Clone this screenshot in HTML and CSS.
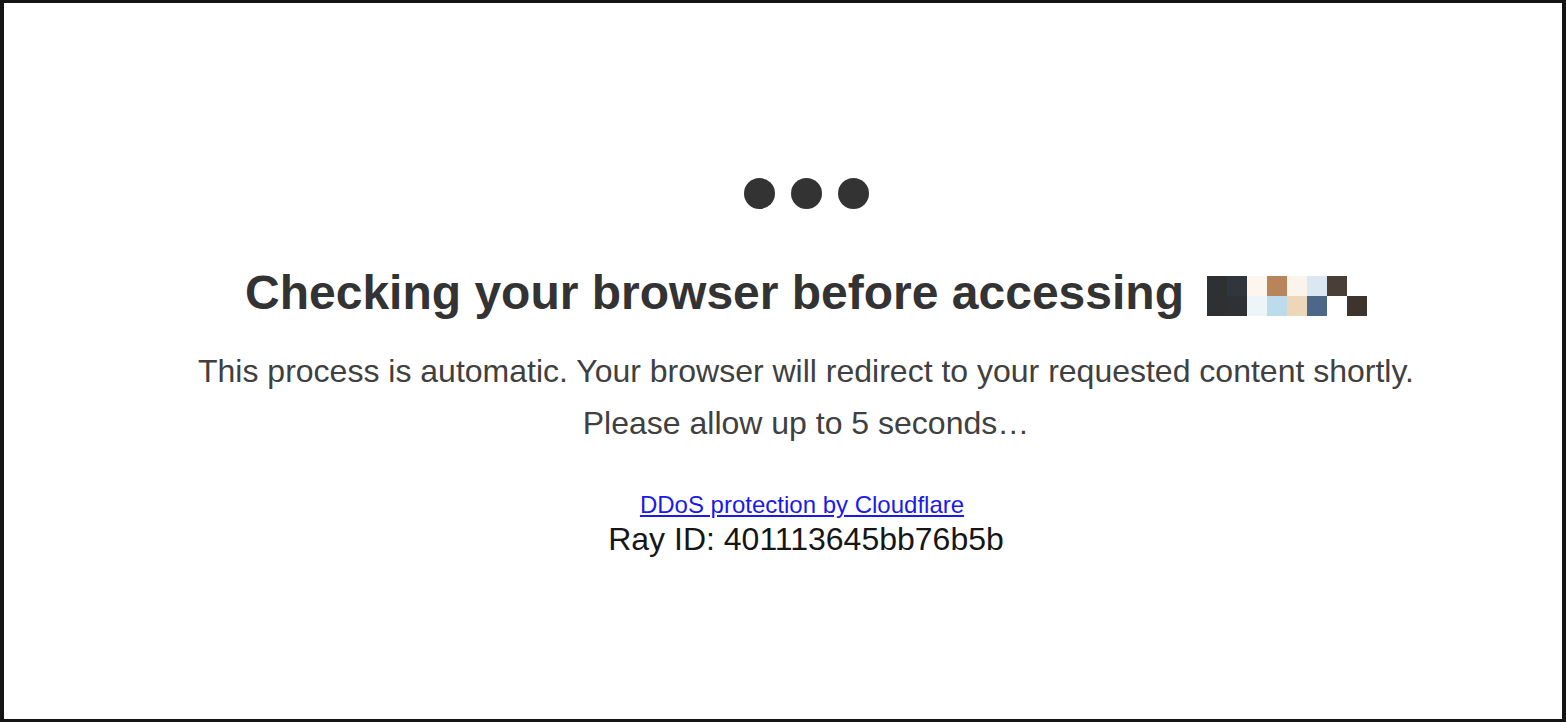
FILE: index.html
```html
<!DOCTYPE html>
<html lang="en">
<head>
<meta charset="utf-8">
<title>Just a moment...</title>
<link rel="stylesheet" href="styles.css">
</head>
<body>
<div class="frame">
  <main class="content">
    <div class="dots"><span></span><span></span><span></span></div>
    <h1 class="title">Checking your browser before accessing<span class="mosaic" aria-label="redacted"><span class="mosaic-grid"><i class="c1"></i><i class="c2"></i><i class="c3"></i><i class="c4"></i><i class="c5"></i><i class="c6"></i><i class="c7"></i><i class="c0"></i><i class="c1"></i><i class="c8"></i><i class="c9"></i><i class="c10"></i><i class="c11"></i><i class="c12"></i><i class="c0"></i><i class="c13"></i></span></span></h1>
    <p class="text first">This process is automatic. Your browser will redirect to your requested content shortly.</p>
    <p class="text second">Please allow up to 5 seconds…</p>
    <a class="link" href="#">DDoS protection by Cloudflare</a>
    <div class="ray">Ray ID: 401113645bb76b5b</div>
  </main>
</div>
</body>
</html>
```

FILE: styles.css
```css
html, body {
  margin: 0;
  padding: 0;
  background: #ffffff;
}

.frame {
  box-sizing: border-box;
  width: 1566px;
  height: 722px;
  border-style: solid;
  border-color: #141414;
  border-width: 3px 4px 3px 4px;
  background: #ffffff;
  overflow: hidden;
}

.content {
  display: flex;
  flex-direction: column;
  align-items: center;
  padding-left: 46px;
  padding-top: 175px;
  font-family: "Liberation Sans", Arial, Helvetica, sans-serif;
}

.dots {
  display: flex;
  gap: 16px;
  height: 31px;
}

.dots span {
  width: 31px;
  height: 31px;
  border-radius: 50%;
  background: #333333;
}

.title {
  margin: 56px 0 0 0;
  font-size: 48px;
  line-height: 56px;
  height: 56px;
  font-weight: 700;
  color: #333333;
  white-space: nowrap;
}

.mosaic {
  display: inline-block;
  width: 160px;
  height: 40px;
  margin-left: 23px;
  margin-top: 11px;
  vertical-align: top;
}

.mosaic-grid {
  display: grid;
  grid-template-columns: repeat(8, 20px);
  grid-template-rows: repeat(2, 20px);
}

.mosaic i { display: block; }
.c0 { background: #ffffff; }
.c1 { background: #2e3032; }
.c2 { background: #30363b; }
.c3 { background: #fcf6ef; }
.c4 { background: #b8845a; }
.c5 { background: #fbf4ea; }
.c6 { background: #dbe8f4; }
.c7 { background: #4a3f36; }
.c8 { background: #2f3234; }
.c9 { background: #eef5f8; }
.c10 { background: #bcdcec; }
.c11 { background: #ecd7b8; }
.c12 { background: #4c6787; }
.c13 { background: #3e342e; }

.text {
  margin: 0;
  font-size: 32px;
  line-height: 40px;
  color: #404040;
  white-space: nowrap;
}

.text.first { margin-top: 30px; }
.text.second { margin-top: 12px; }

.link {
  margin-top: 47px;
  margin-left: -8px;
  font-size: 24px;
  line-height: 29px;
  color: #1a1aee;
  text-decoration: underline;
}

.ray {
  font-size: 32px;
  line-height: 40px;
  color: #161616;
}
```
